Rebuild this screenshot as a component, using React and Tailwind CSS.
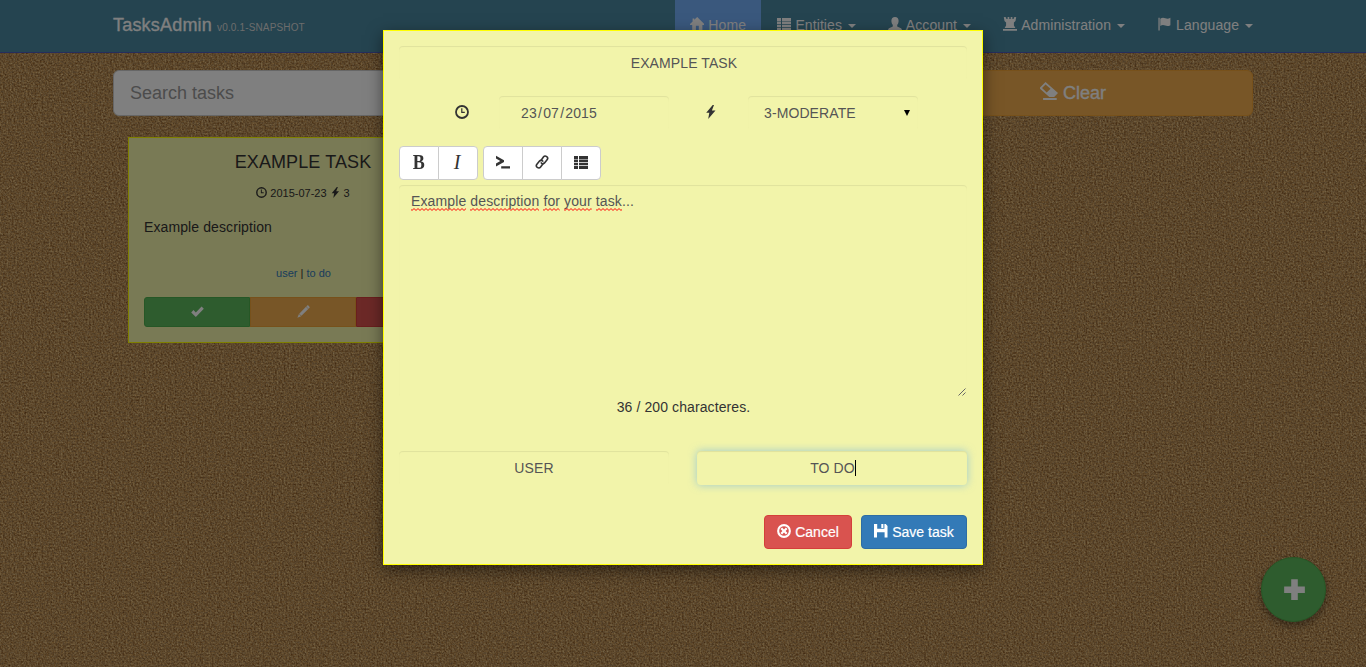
import React from 'react';

function Icon({ name, className = 'size-3.5' }) {
  return (
    <svg viewBox="0 0 14 14" fill="currentColor" className={`${className} shrink-0`}>
      {shapes[name]}
    </svg>
  );
}

const shapes = {
  home: <path d="M7.2 0 14.4 7.2 14 7.9h-1.6V13H8.8V8.8H5.9V13H2.2V7.9H.2L-.2 7.2 2.6 4.4V1.5h1.7v1.3z" />,
  list: (
    <path d="M0 1h4v3H0zM5 1h9v3H5zM0 4.5h4V7H0zM5 4.5h9V7H5zM0 7.7h4v2.5H0zM5 7.7h9v2.5H5zM0 11h4v3H0zM5 11h9v3H5z" />
  ),
  user: (
    <path d="M7 0c2.3 0 3.6 1.5 3.6 3.7 0 1.9-.6 3.3-1.4 4.1v1.1c0 .6.4.9 1 1.2l2.8 1.2c.6.3.9.9.9 1.9H.1c0-1 .3-1.6.9-1.9l2.8-1.2c.6-.3 1-.6 1-1.2V7.8C4 7 3.4 5.6 3.4 3.7 3.4 1.5 4.7 0 7 0z" />
  ),
  tower: (
    <path d="M.8 0 3 .3l.4 1.6h1.2V0h1.7v1.9h1.4V0h1.7v1.9h1.2L11 .3l2.2-.3-.7 4.1-1.6 1.3v3.2l1.5 2.5H1.6l1.5-2.5V5.4L1.5 4.1zM0 12h14v1.8H0z" />
  ),
  flag: (
    <path d="M.4.8h1.3v12.7H.4zM2.3 1.8c1.7-1.3 3.3-1.2 5-.5 1.7.7 3.1.7 5.1-.5v7.4c-1.8 1.1-3.5 1.1-5.2.4-1.6-.7-3.2-.8-4.9.4z" />
  ),
  clock: (
    <path fillRule="evenodd" d="M7 .1a6.9 6.9 0 1 1 0 13.8A6.9 6.9 0 0 1 7 .1zm0 1.8a5.1 5.1 0 1 0 0 10.2A5.1 5.1 0 0 0 7 1.9zM6.2 3.2h1.2v3.6h2.4V8H6.2z" />
  ),
  flash: <path d="M8.7 0 2.2 7.8h3.1L4.2 14l7.3-8.5H7.9L10 0z" />,
  check: <path d="m.2 8 2.5-2.5 2.5 2.6L11.4 1.6l2.4 2.4-8.6 9z" />,
  pencil: <path d="M11 .6c.4-.4.8-.4 1.2 0l1.2 1.2c.4.4.4.9 0 1.3l-1 1-2.4-2.4zM9.7 2l2.4 2.4-7.3 7.3-2.4-2.4zM2.1 9.6l2.4 2.4-4.1 1.7z" />,
  eraser: (
    <path fillRule="evenodd" d="M4.3 0 14 8.6 11 11.6H7.2L0 5.3V4.2zM4.3 1.9 1.6 4.7 5.2 8.1 8.2 5.2zM2.4 12.5H13V14H2.4z" />
  ),
  remove: (
    <path fillRule="evenodd" d="M7 .1a6.9 6.9 0 1 1 0 13.8A6.9 6.9 0 0 1 7 .1zm0 2.1a4.8 4.8 0 1 0 0 9.6A4.8 4.8 0 0 0 7 2.2zM5.1 3.5 7 5.4l1.9-1.9 1.6 1.6L8.6 7l1.9 1.9-1.6 1.6L7 8.6l-1.9 1.9-1.6-1.6L5.4 7 3.5 5.1z" />
  ),
  save: (
    <path fillRule="evenodd" d="M0 0h3.2v4.8h7.2V0h1.4L13.5 2v11.5h-2.9V8.2H3v5.3H0zM7.3 0h2.1v3.9H7.3z" />
  ),
  plus: <path d="M5 .8h4v4.3h4.3v4H9v4.3H5V9.1H.7v-4H5z" />,
  console: <path d="M0 .8 8 5.2v1.8L0 11.4V8.6l4.3-2.5L0 3.6zM5.2 11.2H14v2.3H5.2z" />,
  link: (
    <g fill="none" stroke="currentColor" strokeWidth="1.6" strokeLinecap="round">
      <path d="M8.4 8.3 5.6 12c-.8 1-2.3 1.1-3.3.4-1-.8-1.2-2.2-.4-3.2L4.5 6c.9-1 2.3-1 3.2.1" />
      <path d="M5.8 5.7 8.4 2c.8-1 2.3-1.1 3.3-.4 1 .8 1.2 2.2.4 3.2L9.5 8c-.9 1-2.3 1-3.2-.1" />
    </g>
  ),
};

function Caret() {
  return <span className="ml-1.5 mt-px border-x-4 border-t-4 border-x-transparent border-t-white" />;
}

function NavItem({ icon, label, width, active, caret = true }) {
  return (
    <a className={`flex h-[52px] items-center justify-end pr-[15px] pb-[2px] ${width} ${active ? 'bg-[#74b1fb]' : ''}`}>
      <Icon name={icon} className="mb-[3px] size-[14px]" />
      <span className="ml-1 tracking-[0.08px]">{label}</span>
      {caret && <Caret />}
    </a>
  );
}

function Cork() {
  return (
    <svg className="absolute inset-0 -z-10 size-full">
      <filter id="cork" x="0" y="0" width="100%" height="100%" colorInterpolationFilters="sRGB">
        <feTurbulence type="fractalNoise" baseFrequency="0.57" numOctaves="3" seed="23" />
        <feColorMatrix values="0.5 0.2 0 0 0.37  0.48 0.3 0 0 0.165  0.35 0.35 0 0 -0.01  0 0 0 0 1" />
      </filter>
      <rect width="100%" height="100%" filter="url(#cork)" />
    </svg>
  );
}

function Misspelled({ children }) {
  return (
    <span className="relative inline-block">
      {children}
      <svg className="absolute bottom-0 left-0 h-[3px] w-full">
        <defs>
          <pattern id="squiggle" width="4" height="3" patternUnits="userSpaceOnUse">
            <path d="M-1 .5 1 2.5 3 .5 5 2.5" fill="none" stroke="#f00" strokeWidth="1" />
          </pattern>
        </defs>
        <rect width="100%" height="3" fill="url(#squiggle)" />
      </svg>
    </span>
  );
}

const field =
  'flex h-[34px] items-center rounded text-[#555] tracking-[0.1px] shadow-[inset_0_1px_1px_rgba(0,0,0,0.075)]';

function ToolButton({ children, className = '' }) {
  return (
    <button className={`flex h-[34px] w-10 items-center justify-center border border-[#ccc] bg-white pb-0.5 ${className}`}>
      {children}
    </button>
  );
}

function TaskDialog() {
  return (
    <section className="absolute left-[383px] top-[30px] flex h-[535px] w-[600px] flex-col border border-[#ff0] bg-[#f2f4aa] p-[15px] shadow-[0_5px_15px_rgba(0,0,0,0.5)]">
      <div className={`${field} justify-center pl-0.5`}>EXAMPLE TASK</div>
      <div className="mt-4 flex">
        <span className="flex w-[100px] justify-end pt-[9px] pr-[30px]">
          <Icon name="clock" />
        </span>
        <div className={`${field} w-[170px] pl-[22px]`}>
          23<span className="px-[1.2px]">/</span>07<span className="px-[1.2px]">/</span>2015
        </div>
        <span className="flex w-[79px] justify-center pt-[9px] pl-[5px]">
          <Icon name="flash" />
        </span>
        <div className={`${field} w-[170px] justify-between pl-4 pr-2`}>
          3-MODERATE
          <svg viewBox="0 0 6 6" className="size-1.5"><path d="M0 0h6L3 6z" fill="#000" /></svg>
        </div>
      </div>
      <div className="mt-4 flex gap-[5px]">
        <div className="flex">
          <ToolButton className="rounded-l"><b className="scale-x-90 font-['Liberation_Serif',serif] text-[20px] font-bold leading-none">B</b></ToolButton>
          <ToolButton className="-ml-px rounded-r"><i className="pr-0.5 font-['Liberation_Serif',serif] text-[20px] leading-none">I</i></ToolButton>
        </div>
        <div className="flex">
          <ToolButton className="rounded-l"><Icon name="console" /></ToolButton>
          <ToolButton className="-ml-px"><Icon name="link" /></ToolButton>
          <ToolButton className="-ml-px rounded-r"><Icon name="list" /></ToolButton>
        </div>
      </div>
      <div className="relative mt-[5px] h-[212px] rounded px-3 pt-1.5 leading-5 tracking-[0.12px] text-[#555] shadow-[inset_0_1px_1px_rgba(0,0,0,0.075)]">
        <Misspelled>Example</Misspelled> <Misspelled>description</Misspelled> <Misspelled>for</Misspelled>{' '}
        <Misspelled>your</Misspelled> <Misspelled>task</Misspelled>...
        <svg viewBox="0 0 8 8" className="absolute bottom-px right-px size-2" fill="none" stroke="#666">
          <path d="M.5 7.5l7-7M4.5 7.5l3-3" />
        </svg>
      </div>
      <p className="pl-px text-center leading-5 tracking-[0.1px]">36 / 200 characteres.</p>
      <div className="mt-[34px] flex justify-between">
        <div className={`${field} w-[270px] justify-center`}>USER</div>
        <div className="flex h-[34px] w-[270px] items-center justify-center rounded text-[#555] tracking-[0.1px] shadow-[inset_0_1px_1px_rgba(0,0,0,0.075),0_0_8px_rgba(102,175,233,0.6)]">
          <span className="ml-0.5">TO DO</span><span className="h-4 w-px bg-black" />
        </div>
      </div>
      <div className="mt-[30px] flex justify-end gap-[9px] text-white [-webkit-text-stroke:0.2px]">
        <button className="flex h-[34px] w-[88px] items-center justify-center gap-1 rounded border border-[#d43f3a] bg-[#d9534f]">
          <Icon name="remove" className="mb-0.5 size-[14px]" />Cancel
        </button>
        <button className="flex h-[34px] w-[106px] items-center justify-center gap-1 rounded border border-[#2e6da4] bg-[#337ab7]">
          <Icon name="save" className="mb-0.5 size-[14px]" />Save task
        </button>
      </div>
    </section>
  );
}

function TaskCard() {
  return (
    <article className="ml-[15px] mt-[21px] h-[206px] w-[350px] border border-[#ff0] bg-[#f2f4aa] p-[15px]">
      <h2 className="-mt-px text-center text-[18px] leading-5 tracking-[0.1px]">EXAMPLE TASK</h2>
      <div className="mt-[13px] flex h-4 items-center justify-center text-[11px]">
        <Icon name="clock" className="mr-[3px] mb-px size-[11px]" />2015-07-23
        <Icon name="flash" className="ml-[3px] mr-[3px] mb-px size-[11px]" />3
      </div>
      <p className="mt-4 leading-5 tracking-[0.1px]">Example description</p>
      <p className="mt-7 pl-px text-center text-[11px] leading-4 text-[#333]">
        <a className="text-[#337ab7]">user</a> | <a className="text-[#337ab7]">to do</a>
      </p>
      <div className="mt-4 flex h-[30px] text-white">
        <button className="flex flex-1 items-center justify-center rounded-l-[3px] border border-[#4cae4c] bg-[#5cb85c]">
          <Icon name="check" className="mb-px size-[13px]" />
        </button>
        <button className="flex flex-1 items-center justify-center border border-[#eea236] bg-[#f0ad4e]">
          <Icon name="pencil" className="mb-px size-[13px]" />
        </button>
        <button className="flex-1 rounded-r-[3px] border border-[#d43f3a] bg-[#d9534f]" />
      </div>
    </article>
  );
}

export default function App() {
  return (
    <div className="relative isolate h-[667px] w-[1366px] overflow-hidden font-['Liberation_Sans',Arial,sans-serif] text-[14px] leading-5 text-[#333]">
      <Cork />
      <header className="h-[53px] border-b border-[#4c5cb8] bg-[#4a88a0] text-white">
        <div className="mx-auto flex w-[1140px]">
          <div className="flex w-[562px] items-baseline pt-[15px] text-[18px] tracking-[0.2px] [-webkit-text-stroke:0.3px]">
            TasksAdmin<small className="ml-[5px] text-[10px] tracking-[0.15px] text-[#d8d8d8] [-webkit-text-stroke:0px]">v0.0.1-SNAPSHOT</small>
          </div>
          <nav className="-mr-[15px] flex">
            <NavItem icon="home" label="Home" width="w-[86px]" active caret={false} />
            <NavItem icon="list" label="Entities" width="w-[110px]" />
            <NavItem icon="user" label="Account" width="w-[115px]" />
            <NavItem icon="tower" label="Administration" width="w-[154px]" />
            <NavItem icon="flag" label="Language" width="w-[128px]" />
          </nav>
        </div>
      </header>
      <main className="mx-auto w-[1140px] pt-[17px]">
        <div className="flex h-[46px] gap-2.5 text-[18px]">
          <div className="flex flex-1 items-center rounded-md border border-[#ccc] bg-white px-4 text-[#999]">Search tasks</div>
          <button className="flex w-[360px] items-center justify-center gap-[5px] rounded-md border border-[#eea236] bg-[#f0ad4e] text-white [-webkit-text-stroke:0.3px]">
            <Icon name="eraser" className="mb-1 size-[18px]" />Clear
          </button>
        </div>
        <TaskCard />
      </main>
      <button className="absolute left-[1261px] top-[557px] flex size-[65px] items-center justify-center rounded-full border border-[#4cae4c] bg-[#5cb85c] pl-px text-white shadow-[0_4px_8px_rgba(0,0,0,0.4)]">
        <Icon name="plus" className="size-[23px]" />
      </button>
      <div className="absolute inset-0 bg-black/50" />
      <TaskDialog />
    </div>
  );
}
